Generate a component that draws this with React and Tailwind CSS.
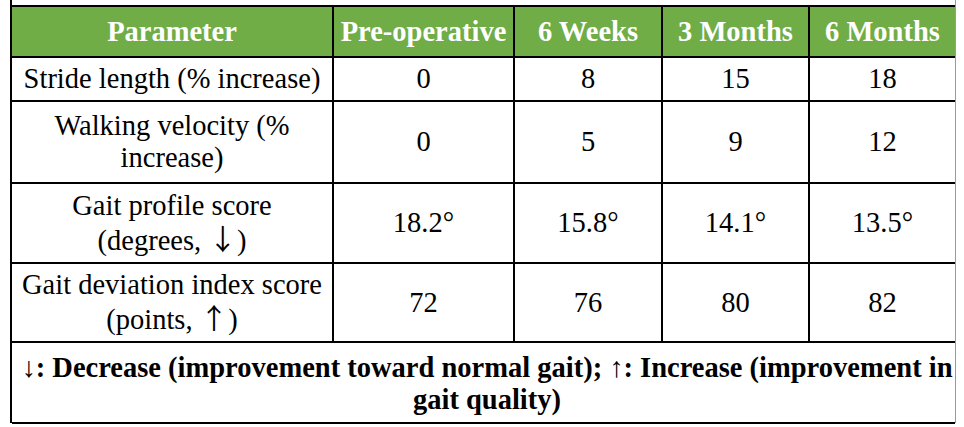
const cjk = "[font-family:'Noto_Sans_CJK_SC',sans-serif]";

const rows = [
  { label: 'Stride length (% increase)', values: ['0', '8', '15', '18'], h: 'h-[44px]' },
  { label: 'Walking velocity (% increase)', values: ['0', '5', '9', '12'], h: 'h-[82px]' },
  {
    label: (
      <>
        Gait profile score
        <br />
        (degrees, <span className={cjk}>↓</span>)
      </>
    ),
    values: ['18.2°', '15.8°', '14.1°', '13.5°'],
    h: 'h-[80px]',
  },
  {
    label: (
      <>
        Gait deviation index score
        <br />
        (points, <span className={cjk}>↑</span>)
      </>
    ),
    values: ['72', '76', '80', '82'],
    h: 'h-[79px]',
  },
];

const headers = ['Parameter', 'Pre-operative', '6 Weeks', '3 Months', '6 Months'];

export default function App() {
  return (
    <div className="w-[964px] h-[427px] bg-white pl-[10px] text-black">
      <div className="w-[946px] h-[423px] border-l-2 border-l-black border-r border-r-[#9a9a9a] pt-[5px]">
        <table className="w-full table-fixed border-collapse text-[28.5px] leading-[32px] [font-family:'Liberation_Serif','Times_New_Roman',serif]">
          <colgroup>
            <col className="w-[321px]" />
            <col className="w-[181px]" />
            <col className="w-[148px]" />
            <col className="w-[147px]" />
            <col />
          </colgroup>
          <thead>
            <tr>
              {headers.map((h, i) => (
                <th
                  key={h}
                  className={`h-[51px] bg-[#70ad47] text-white font-bold text-center align-middle px-0 border-t-2 border-b-2 border-black ${
                    i === 0 ? 'border-r' : i === 4 ? 'border-l-2' : 'border-x-2'
                  }`}
                >
                  {h}
                </th>
              ))}
            </tr>
          </thead>
          <tbody>
            {rows.map((r, ri) => (
              <tr key={ri}>
                <td className={`${r.h} text-center align-middle px-1 border-b-2 border-r border-black`}>{r.label}</td>
                {r.values.map((v, i) => (
                  <td
                    key={i}
                    className={`text-center align-middle border-b-2 border-black ${i === 3 ? 'border-l-2' : 'border-x-2'}`}
                  >
                    {v}
                  </td>
                ))}
              </tr>
            ))}
            <tr>
              <td colSpan={5} className="h-[81px] pl-[8px] pr-[1px] pt-[2px] text-center align-middle font-bold border-b-2 border-black">
                ↓: Decrease (improvement toward normal gait); ↑: Increase (improvement in gait quality)
              </td>
            </tr>
          </tbody>
        </table>
      </div>
    </div>
  );
}
